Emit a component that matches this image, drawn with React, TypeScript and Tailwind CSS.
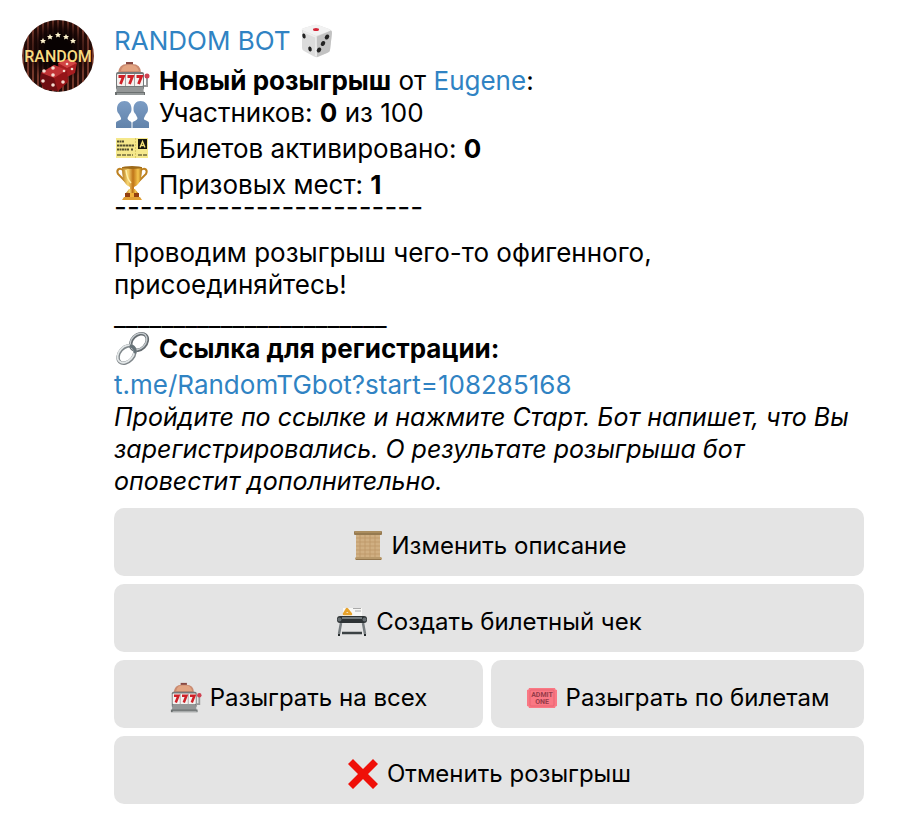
import type { ReactNode } from "react";

interface IconProps {
  className?: string;
}

interface InfoLineProps {
  icon: ReactNode;
  children: ReactNode;
}

export default function App() {
  return (
    <main className="min-h-screen bg-white font-['Inter','Noto_Sans',sans-serif] text-[26px] leading-8 text-black">
      <article className="flex gap-5 pt-5 pr-9 pb-6 pl-[22px]">
        <Avatar className="size-[72px] shrink-0" />

        <div className="min-w-0 flex-1">
          <h1 className="flex h-[41px] items-center gap-2 text-[#3083c3]">
            RANDOM BOT
            <Dice className="size-[34px]" />
          </h1>

          {/* Giveaway summary */}
          <InfoLine icon={<SlotMachine className="size-9" />}>
            <b className="font-bold">Новый розыгрыш</b> от{" "}
            <a href="#eugene" className="text-[#3083c3]">Eugene</a>:
          </InfoLine>
          <div className="flex h-8 items-center gap-[9px]">
            <People className="size-9 shrink-0" />
            <p>Участников: <b className="font-bold">0</b> из 100</p>
          </div>
          <InfoLine icon={<ConcertTicket className="size-9" />}>
            Билетов активировано: <b className="font-bold">0</b>
          </InfoLine>
          <InfoLine icon={<Trophy className="size-9" />}>
            Призовых мест: <b className="font-bold">1</b>
          </InfoLine>
          <p className="h-9 text-[28px] leading-3 whitespace-nowrap">------------------------</p>

          <p>
            Проводим розыгрыш чего-то офигенного,
            <br />
            присоединяйтесь!
          </p>
          <p className="h-8 leading-8 whitespace-nowrap">_______________________</p>

          {/* Registration */}
          <div className="flex h-8 items-center gap-[9px]">
            <Chain className="size-9 shrink-0" />
            <p className="font-bold">Ссылка для регистрации:</p>
          </div>
          <p className="pt-1">
            <a href="https://t.me/RandomTGbot?start=108285168" className="text-[#3083c3]">
              t.me/RandomTGbot?start=108285168
            </a>
          </p>
          <p className="text-[25px] italic">
            Пройдите по ссылке и нажмите Старт. Бот напишет, что Вы
            зарегистрировались. О результате розыгрыша бот
            оповестит дополнительно.
          </p>

          {/* Inline keyboard */}
          <div className="mt-[11px] flex flex-col gap-2">
            <KeyButton icon={<Scroll className="size-8" />}>Изменить описание</KeyButton>
            <KeyButton icon={<Printer className="size-8" />}>Создать билетный чек</KeyButton>
            <div className="grid grid-cols-[369fr_373fr] gap-2">
              <KeyButton icon={<SlotMachine className="size-8" />}>Разыграть на всех</KeyButton>
              <KeyButton icon={<AdmitTicket className="size-8" />}>Разыграть по билетам</KeyButton>
            </div>
            <KeyButton icon={<Cross className="size-8" />}>Отменить розыгрыш</KeyButton>
          </div>
        </div>
      </article>
    </main>
  );
}

function InfoLine({ icon, children }: InfoLineProps) {
  return (
    <div className="flex h-9 items-end gap-[9px]">
      <span className="shrink-0">{icon}</span>
      <p>{children}</p>
    </div>
  );
}

function KeyButton({ icon, children }: InfoLineProps) {
  return (
    <button type="button" className="flex h-[68px] w-full items-center justify-center gap-2 rounded-[10px] bg-[#e4e4e4] pt-2 text-2xl">
      {icon}
      {children}
    </button>
  );
}

function Avatar({ className }: IconProps) {
  return (
    <svg viewBox="0 0 72 72" className={className} role="img" aria-label="Random Bot">
      <defs>
        <pattern id="stripes" width="5" height="72" patternUnits="userSpaceOnUse">
          <rect width="5" height="72" fill="#240c08" />
          <rect width="2" height="72" fill="#74382b" />
        </pattern>
        <radialGradient id="shade" cx=".5" cy=".42" r=".5">
          <stop offset=".35" stopColor="#080202" />
          <stop offset=".6" stopColor="#100303" stopOpacity=".8" />
          <stop offset=".9" stopColor="#200604" stopOpacity="0" />
        </radialGradient>
        <clipPath id="round"><circle cx="36" cy="36" r="36" /></clipPath>
      </defs>
      <g clipPath="url(#round)">
        <rect width="72" height="72" fill="url(#stripes)" />
        <rect width="72" height="72" fill="url(#shade)" />
        <path d="m36 43 10-4 9 4-2 10-8 4-8-5Z" fill="#a81d20" />
        <path d="m36 43 10-4 9 4-10 5Z" fill="#d24444" />
        <path d="m19 53 13-8 13 5 1 12-10 9-14-2-4-8Z" fill="#951518" />
        <path d="m19 53 13-8 13 5-13 8Z" fill="#c03335" />
        <path d="m19 53 13 5 4 13-14-2-4-8Z" fill="#6e0e12" />
        <g fill="#f4ddd1">
          <circle cx="22" cy="51" r="1.800" /><circle cx="31" cy="48" r="1.800" /><circle cx="31" cy="55" r="1.800" />
          <circle cx="21" cy="61" r="1.800" /><circle cx="31" cy="65" r="1.800" /><circle cx="41" cy="62" r="1.800" />
          <circle cx="45" cy="44" r="1.300" /><circle cx="42" cy="51" r="1.300" /><circle cx="50" cy="49" r="1.300" />
        </g>
        <text x="36" y="42" textAnchor="middle" fontSize="16" fontFamily="Roboto, sans-serif" fontWeight="500" fill="#f9dc82">RANDOM</text>
        <g fill="#fff4cd">
          <path id="star" d="m36 12 1 2 2 0-1.500 1.500.5 2-2-1-2 1 .5-2L33 14l2 0Z" />
          <use href="#star" x="-8" y="2" /><use href="#star" x="8" y="2" />
          <use href="#star" x="-15" y="6" /><use href="#star" x="15" y="6" />
        </g>
      </g>
    </svg>
  );
}

function Dice({ className }: IconProps) {
  return (
    <svg viewBox="0 0 34 34" className={className} aria-hidden="true">
      <path d="M3 7Q2 5 5 4L15 1q2-.7 4 0l11 4q3 1 3 3l-2 18q0 2-3 3l-9 4q-2 .6-4-.4L5 27q-2-1-2-3Z" fill="#dcdcdc" />
      <path d="M3 6Q2 5 5 4l10-3q2-.7 4 0l11 4q2 1 1 2l-14 5Z" fill="#f2f2f2" />
      <path d="m17 13 14-6q2-1 2 2l-2 17q0 2-3 3l-10 4Z" fill="#c2c2c2" />
      <path d="M4 7.500 17 13v19" fill="none" stroke="#ededed" strokeWidth="1.500" />
      <ellipse cx="17" cy="5.500" rx="3" ry="1.500" fill="#d42536" />
      <g fill="#222">
        <ellipse cx="5" cy="12" rx="1.600" ry="2.600" transform="rotate(-15 5 12)" />
        <ellipse cx="11" cy="25" rx="1.700" ry="2.600" transform="rotate(-15 11 25)" />
        <ellipse cx="28" cy="13" rx="2" ry="2.700" transform="rotate(35 28 13)" />
        <ellipse cx="24" cy="19.500" rx="2" ry="2.700" transform="rotate(35 24 19.500)" />
        <ellipse cx="20" cy="26" rx="2" ry="2.700" transform="rotate(35 20 26)" />
      </g>
    </svg>
  );
}

function SlotMachine({ className }: IconProps) {
  return (
    <svg viewBox="0 0 36 36" className={className} aria-hidden="true">
      <path d="M12 1h7v4h-7z" fill="#874943" />
      <path d="M4 12q1-9 9-9h5q9 0 9 9Z" fill="#c98a70" />
      <path d="M7 10q1-6 7-6h4q5 0 7 6Z" fill="#e2a482" />
      <rect x="2" y="11" width="28" height="18" rx="2" fill="#74797a" />
      <path d="M3 26h26l1 6H2Z" fill="#949797" />
      <path d="M1 31h30v3H1z" fill="#6b7070" />
      <path d="M3 33h27" stroke="#c0c3c3" strokeWidth="1" />
      <rect x="3" y="13" width="26" height="12" rx="1" fill="#f5f2f0" />
      <path d="M11.500 13v12M20.500 13v12" stroke="#a8a5a5" />
      <g fill="none" stroke="#cf2027" strokeWidth="2.800">
        <path d="M4.500 15.500h5l-3 7.500M13.500 15.500h5l-3 7.500M22.500 15.500h5l-3 7.500" />
      </g>
      <path d="M30 25h3V16" fill="none" stroke="#999" strokeWidth="2" />
      <circle cx="33" cy="15" r="2.500" fill="#cf4251" />
    </svg>
  );
}

function People({ className }: IconProps) {
  return (
    <svg viewBox="0 0 36 36" className={className} aria-hidden="true">
      <defs>
        <linearGradient id="people" x2="0" y2="1">
          <stop stopColor="#7b9cc4" />
          <stop offset="1" stopColor="#6283aa" />
        </linearGradient>
      </defs>
      <g fill="url(#people)">
        <path d="M10.500 6C15 6 17.500 9 17.500 14c0 3-1 4-2 5l-2 4c0 3 4 3 4 5v5H2v-5c0-3 6-2 5-5l-2-4c-1-1-2-2-2-5 0-5 3-8 7.500-8Z" />
        <path d="M26.500 6C22 6 19.500 9 19.500 14c0 3 1 4 2 5l2 4c0 3-5 3-5 5v5H35v-5c0-3-6-2-5-5l2-4c1-1 2-2 2-5 0-5-3-8-7.500-8Z" />
      </g>
    </svg>
  );
}

function ConcertTicket({ className }: IconProps) {
  return (
    <svg viewBox="0 0 36 36" className={className} aria-hidden="true">
      <path d="M2 9h32v20H2Z" fill="#f5e88b" />
      <g fill="none" stroke="#514d2d" strokeWidth="2">
        <path d="M3 12.500h7" strokeDasharray="2 .5" />
        <path d="M3 16.500h17" strokeDasharray="2.500 .5" />
        <path d="M3 20.500h12M17 20.500h2" strokeDasharray="2 .5" />
      </g>
      <path d="M24 10h9v10h-9z" fill="#17170f" />
      <path d="m26 18.500 2.500-6 2.500 6M27 16.500h3" fill="none" stroke="#f6e379" strokeWidth="1.300" />
      <path d="M3 26h16M24 26h9" stroke="#716b3e" strokeWidth="1.500" strokeDasharray="4 1" />
      <path d="M21.500 9v20" stroke="#dac967" strokeDasharray="2 1" />
    </svg>
  );
}

function Trophy({ className }: IconProps) {
  return (
    <svg viewBox="0 0 36 36" className={className} aria-hidden="true">
      <defs>
        <linearGradient id="gold">
          <stop stopColor="#b87d20" />
          <stop offset=".3" stopColor="#f8d774" />
          <stop offset=".55" stopColor="#bf7418" />
          <stop offset=".8" stopColor="#f5c54d" />
          <stop offset="1" stopColor="#ad7112" />
        </linearGradient>
      </defs>
      <path d="M9 5C5 2 2 5 4 9l8 8M27 5c4-3 7 0 5 4l-8 8" fill="none" stroke="#be8120" strokeWidth="2" />
      <path d="M8 2h20c0 9-1 17-8 20v3h-4v-3C9 19 8 11 8 2Z" fill="url(#gold)" />
      <ellipse cx="18" cy="2.500" rx="10" ry="1.500" fill="#9e6a18" />
      <path d="M15 24h6l3 4H12Z" fill="url(#gold)" />
      <path d="M11 28h14v4H11z" fill="#94400f" />
      <path d="M16 28h4v4h-4z" fill="#f2b33c" />
      <path d="M10 32h16l2 3H8Z" fill="#e0a034" />
      <path d="M12 5q1 9 5 13" fill="none" stroke="#fff0a8" strokeWidth="1.500" />
    </svg>
  );
}

function Chain({ className }: IconProps) {
  return (
    <svg viewBox="0 0 36 36" className={className} aria-hidden="true">
      <g fill="none" strokeLinecap="round">
        <ellipse cx="25" cy="11" rx="7" ry="9.500" transform="rotate(45 25 11)" stroke="#646b70" strokeWidth="3.500" />
        <ellipse cx="24.500" cy="10.500" rx="7" ry="9.500" transform="rotate(45 24.500 10.500)" stroke="#c5cbce" strokeWidth="1.500" />
        <ellipse cx="12.500" cy="23.500" rx="7" ry="10" transform="rotate(42 12.500 23.500)" stroke="#7f868a" strokeWidth="3.500" />
        <ellipse cx="12" cy="23" rx="7" ry="10" transform="rotate(42 12 23)" stroke="#e3e7e8" strokeWidth="1.800" />
        <path d="M17 15q4 1 4 6" stroke="#667278" strokeWidth="3" />
      </g>
    </svg>
  );
}

function Scroll({ className }: IconProps) {
  return (
    <svg viewBox="0 0 32 32" className={className} aria-hidden="true">
      <path d="M4 3h24v25H4Z" fill="#d0af82" />
      <path d="M4 8h24M4 12h24M4 16h24M4 20h24M4 24h24M8 4v24M13 4v24M18 4v24M23 4v24" stroke="#bd9768" strokeWidth=".8" />
      <rect x="2" y="1" width="28" height="4" rx="1" fill="#967a50" />
      <path d="M3 2h26" stroke="#c0a06c" />
      <rect x="3" y="27" width="27" height="3" rx="1.500" fill="#b8996b" />
      <path d="M4 29.500h25" stroke="#94764c" />
    </svg>
  );
}

function Printer({ className }: IconProps) {
  return (
    <svg viewBox="0 0 32 32" className={className} aria-hidden="true">
      <path d="M7 2h19v9H7z" fill="#f7f7f5" />
      <path d="M17 2.500h8M19 5h6" stroke="#aaa" />
      <path d="m8 8 3-5 4 5Z" fill="none" stroke="#e7a22b" strokeWidth="2.500" strokeLinejoin="round" />
      <path d="M5 17 3 28M27 17l2 11" stroke="#777d80" strokeWidth="2.500" />
      <path d="M6 27h20" stroke="#3c4244" strokeWidth="2.500" />
      <rect x="1" y="10" width="30" height="7" rx="3" fill="#2e3335" />
      <path d="M6 12h20" stroke="#8b9396" strokeWidth="1.500" />
      <circle cx="3.500" cy="13.500" r="2" fill="#656c70" /><circle cx="28.500" cy="13.500" r="2" fill="#656c70" />
      <path d="M3 28v2M29 28v2" stroke="#252a2c" strokeWidth="2" />
    </svg>
  );
}

function AdmitTicket({ className }: IconProps) {
  return (
    <svg viewBox="0 0 32 32" className={className} aria-hidden="true">
      <path d="M3 6h26a2 2 0 0 0 2 2v16a2 2 0 0 0-2 2H3a2 2 0 0 0-2-2V8a2 2 0 0 0 2-2Z" fill="#fa7884" />
      <rect x="4" y="8" width="24" height="16" rx="1" fill="none" stroke="#e96472" />
      <g fill="#963b49" fontFamily="Roboto, sans-serif" fontWeight="700" fontSize="7" textAnchor="middle">
        <text x="16" y="15">ADMIT</text>
        <text x="16" y="22">ONE</text>
      </g>
    </svg>
  );
}

function Cross({ className }: IconProps) {
  return (
    <svg viewBox="0 0 32 32" className={className} aria-hidden="true">
      <path d="m6 1 10 10L26 1l5 5-10 10 10 10-5 5-10-10L6 31l-5-5 10-10L1 6Z" fill="#ef1009" />
    </svg>
  );
}
